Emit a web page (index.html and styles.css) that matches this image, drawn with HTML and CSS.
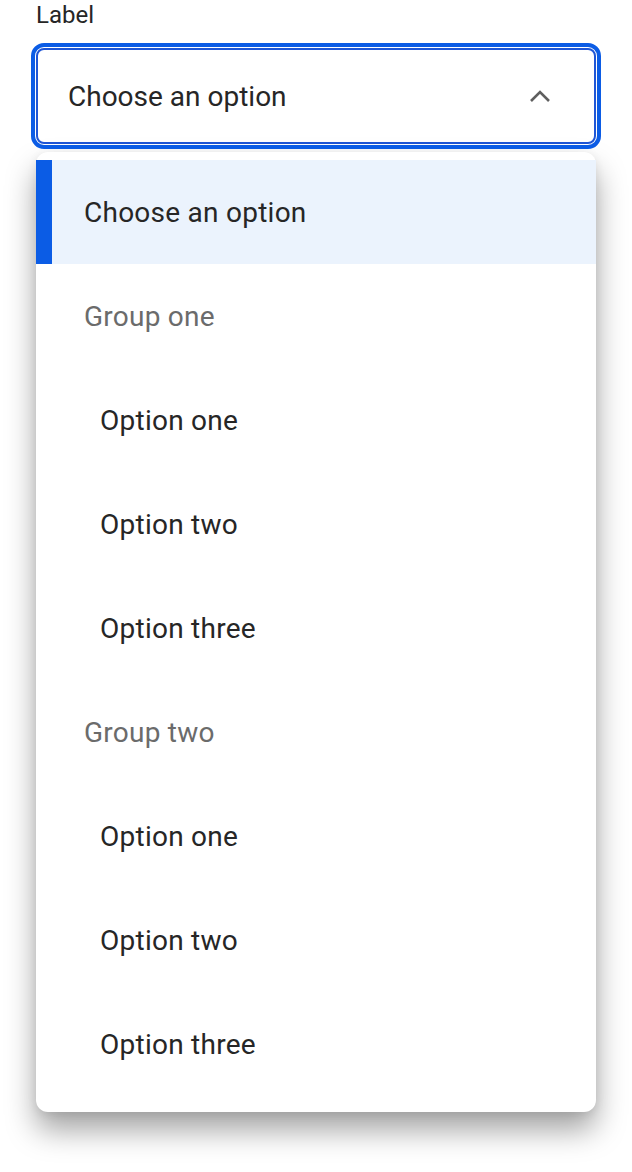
FILE: index.html
```html
<!DOCTYPE html>
<html lang="en">
<head>
<meta charset="utf-8">
<title>Select</title>
<link rel="stylesheet" href="styles.css">
</head>
<body>
<div class="field">
  <div class="label">Label</div>
  <div class="select">
    <span class="select-value">Choose an option</span>
    <svg class="chevron" width="20" height="12" viewBox="0 0 20 12" aria-hidden="true">
      <path d="M1 11 L10 2 L19 11" fill="none" stroke="#5f5f5f" stroke-width="2.6" stroke-linecap="butt"/>
    </svg>
  </div>
  <ul class="menu">
    <li class="item item-selected">Choose an option</li>
    <li class="item group">Group one</li>
    <li class="item option">Option one</li>
    <li class="item option">Option two</li>
    <li class="item option">Option three</li>
    <li class="item group">Group two</li>
    <li class="item option">Option one</li>
    <li class="item option">Option two</li>
    <li class="item option">Option three</li>
  </ul>
</div>
</body>
</html>
```
FILE: styles.css
```css
html, body {
  margin: 0;
  padding: 0;
  background: #ffffff;
}
body {
  font-family: Roboto, "Liberation Sans", Arial, sans-serif;
  color: #262626;
}
.field {
  padding: 0 36px 60px 36px;
}
.label {
  font-size: 24px;
  line-height: 30px;
  color: #262626;
}
.select {
  box-sizing: border-box;
  margin-top: 18px;
  height: 96px;
  border: 2px solid #1f56d6;
  border-radius: 8px;
  outline: 4px solid #0b5ce5;
  outline-offset: 1px;
  display: flex;
  align-items: center;
  justify-content: space-between;
  padding: 0 44px 0 30px;
}
.select-value {
  font-size: 28px;
  color: #262626;
}
.chevron {
  display: block;
}
.menu {
  list-style: none;
  margin: 8px 0 0 0;
  padding: 8px 0 16px 0;
  background: #ffffff;
  border-radius: 12px;
  box-shadow: 0 18px 30px rgba(0, 0, 0, 0.36), 0 2px 10px rgba(0, 0, 0, 0.08);
}
.item {
  box-sizing: border-box;
  height: 104px;
  display: flex;
  align-items: center;
  font-size: 28px;
  letter-spacing: 0.25px;
  padding-left: 48px;
  color: #262626;
}
.item-selected {
  background: #ebf3fd;
  border-left: 16px solid #0b5ce5;
  padding-left: 32px;
}
.group {
  color: #6b6b6b;
}
.option {
  padding-left: 64px;
}
```
